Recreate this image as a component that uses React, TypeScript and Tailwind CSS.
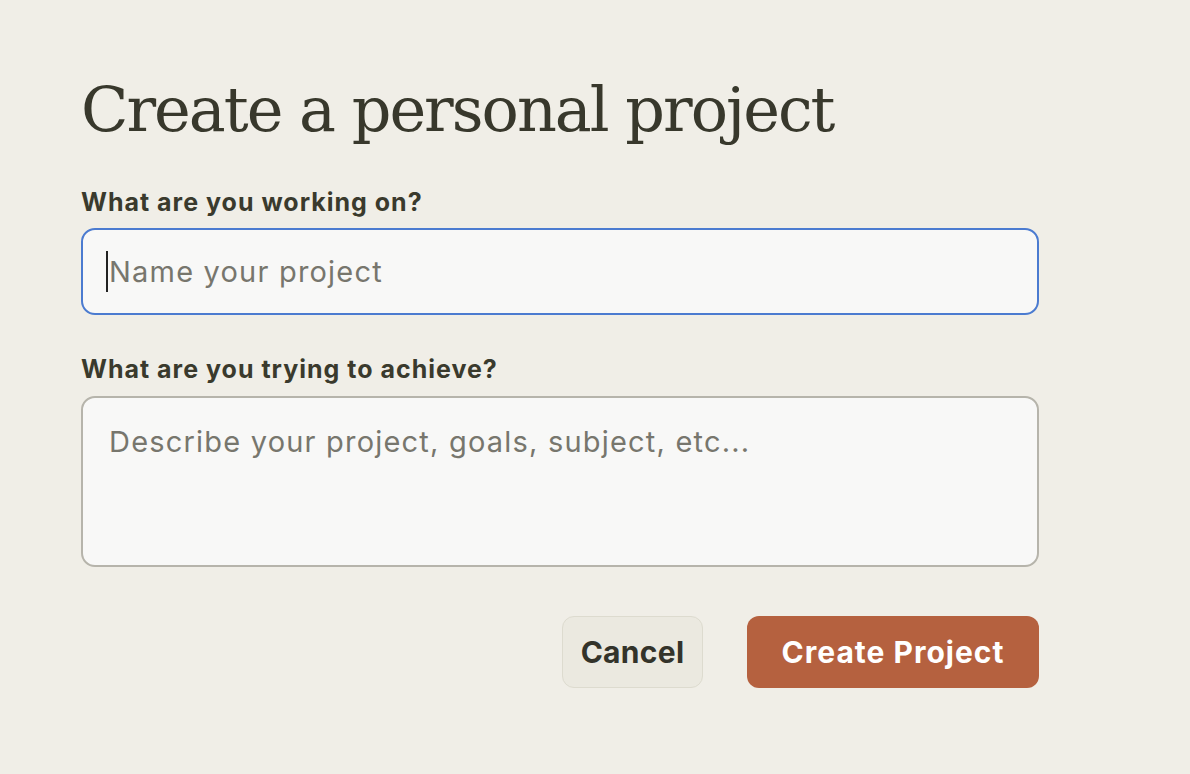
import { useState } from "react";

const sans = "font-['Inter','Noto_Sans',sans-serif]";

const App = () => {
  const [name, setName] = useState("");
  const [goal, setGoal] = useState("");

  return (
    <div className="min-h-screen w-full bg-[#f0eee7] text-[#3a3a2d]">
      <div className="w-[958px] ml-[81px] pt-[70px]">
        <h1 className="font-['DejaVu_Serif','Liberation_Serif',serif] text-[62px] leading-[80px] tracking-[-2px] text-[#38382c]">
          Create a personal project
        </h1>

        <label className={`block mt-[36px] text-[25px] font-bold leading-[32px] tracking-[1px] ${sans}`}>
          What are you working on?
        </label>
        <div className="relative mt-[10px]">
          <input
            value={name}
            onChange={(e) => setName(e.target.value)}
            placeholder="Name your project"
            className={`block w-full h-[87px] rounded-[14px] border-2 border-[#4b7bd0] bg-[#f8f8f7] px-[26px] text-[29px] tracking-[1.2px] outline-none placeholder:text-[#77766d] ${sans}`}
          />
          {!name && (
            <span className="pointer-events-none absolute left-[25px] top-[23px] h-[41px] w-[2px] bg-[#222]" />
          )}
        </div>

        <label className={`block mt-[38px] text-[25px] font-bold leading-[32px] tracking-[1px] ${sans}`}>
          What are you trying to achieve?
        </label>
        <textarea
          value={goal}
          onChange={(e) => setGoal(e.target.value)}
          placeholder="Describe your project, goals, subject, etc..."
          className={`block mt-[11px] w-full h-[171px] resize-none rounded-[14px] border-2 border-[#b6b4ab] bg-[#f8f8f7] px-[26px] pt-[26px] pb-[24px] text-[29px] leading-[36px] tracking-[1.2px] outline-none placeholder:text-[#77766d] ${sans}`}
        />

        <div className="mt-[49px] flex justify-end gap-[44px]">
          <button
            className={`h-[72px] w-[141px] rounded-[12px] border border-[#dddbcf] bg-[#ebe9e0] text-[30px] font-bold tracking-[0.3px] text-[#33332a] ${sans}`}
          >
            Cancel
          </button>
          <button
            className={`h-[72px] w-[292px] rounded-[12px] bg-[#b5613f] text-[30px] font-bold tracking-[1px] text-white ${sans}`}
          >
            Create Project
          </button>
        </div>
      </div>
    </div>
  );
};

export default App;
